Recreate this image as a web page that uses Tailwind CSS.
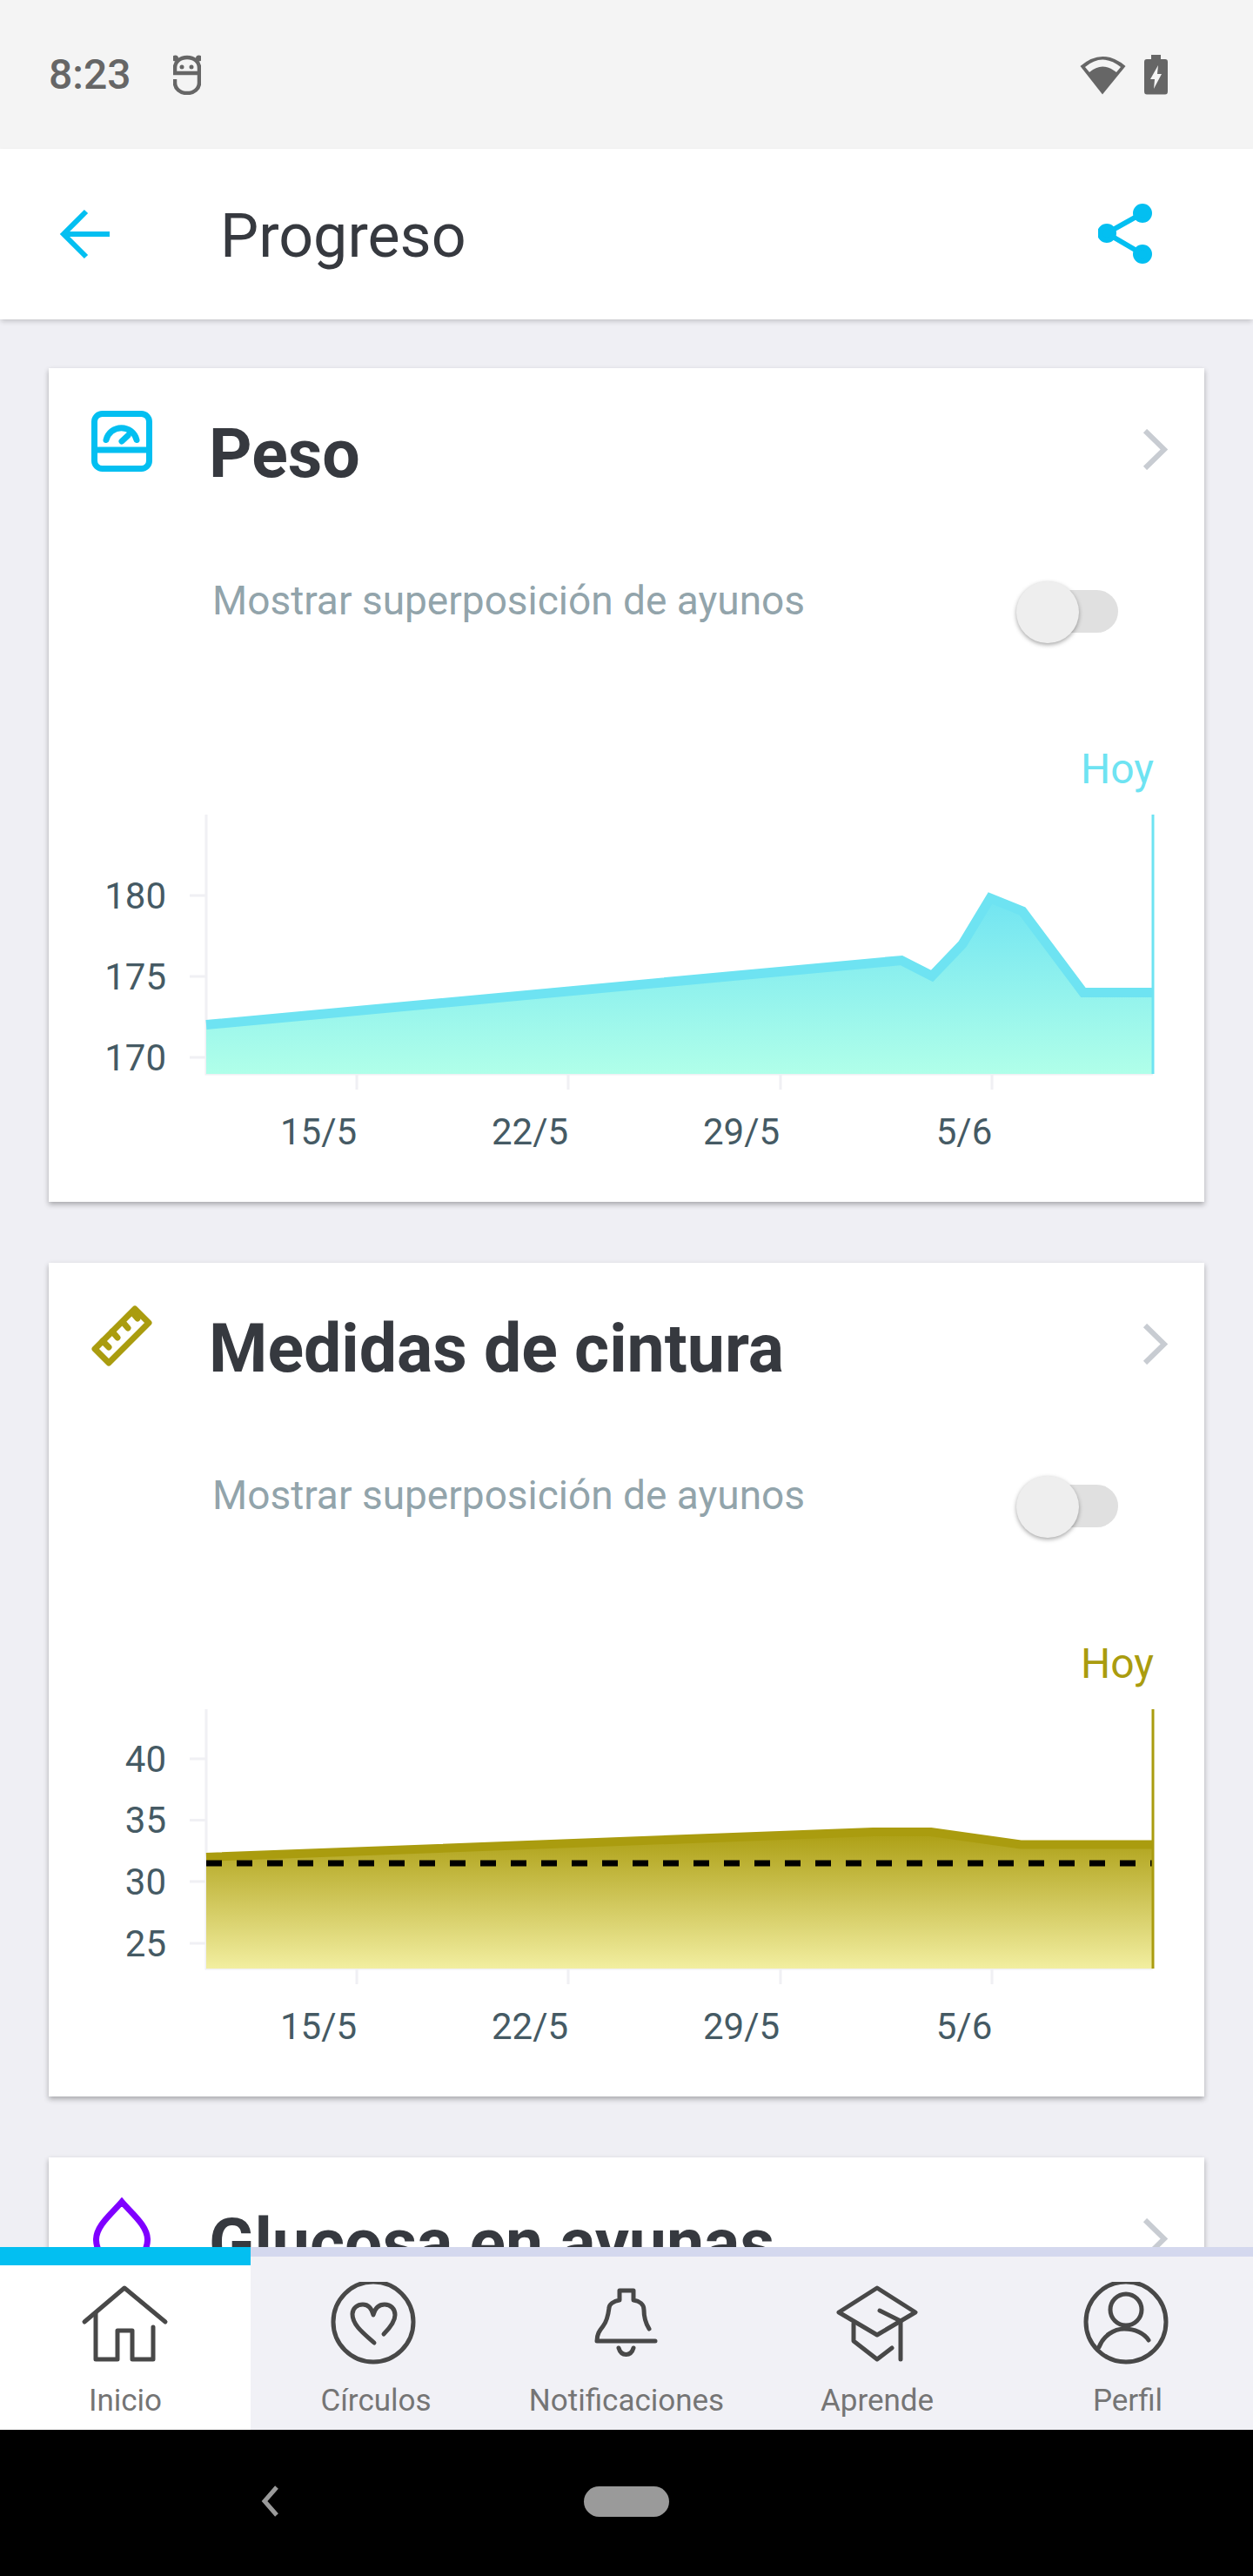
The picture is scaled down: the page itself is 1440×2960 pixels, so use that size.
<!DOCTYPE html>
<html lang="es">
<head>
<meta charset="utf-8">
<script src="https://cdn.jsdelivr.net/npm/@tailwindcss/browser@4"></script>
<title>Progreso</title>
</head>
<body class="m-0">
<div class="w-[1440px] h-[2960px] flex flex-col overflow-hidden bg-[#efeff4] font-['Roboto',sans-serif]">

  <!-- status bar -->
  <div class="h-[171px] shrink-0 bg-[#f4f4f4] flex items-center justify-between pl-[56px] pr-[98px]">
    <div class="flex items-center gap-[49px]">
      <span class="text-[48px] leading-none font-medium text-[#666666] w-[94px]">8:23</span>
      <svg width="32" height="46" viewBox="199 62 32 46" fill="none" stroke="#666666" stroke-width="4.5">
        <path d="M229 83H201V77C201 70 207 65 215 65C223 65 229 70 229 77V94C229 101 223 106 215 106C207 106 201 101 201 94V90"/>
        <circle cx="201.500" cy="66" r="3.500" fill="#666666" stroke="none"/>
        <circle cx="228.500" cy="66" r="3.500" fill="#666666" stroke="none"/>
        <circle cx="209" cy="76" r="2.500" fill="#666666" stroke="none"/>
        <circle cx="220" cy="76" r="2.500" fill="#666666" stroke="none"/>
      </svg>
    </div>
    <div class="flex items-center gap-[20px]">
      <svg width="54" height="46" viewBox="1241 62 54 46">
        <path d="M1241.500 75Q1267 53 1293.500 75L1267 107.500Z" fill="#666666"/>
        <path d="M1247 76Q1267 59 1288 76L1283 82Q1267 69 1252 82Z" fill="#f4f4f4"/>
      </svg>
      <svg width="27" height="46" viewBox="1315 62 27 46">
        <path d="M1323 62H1334V67H1339Q1342 67 1342 70V104Q1342 107.500 1339 107.500H1318Q1315 107.500 1315 104V70Q1315 67 1318 67H1323Z" fill="#666666"/>
        <path d="M1331 74L1322 90H1327L1326 101L1335 84H1330Z" fill="#f4f4f4"/>
      </svg>
    </div>
  </div>

  <!-- app bar -->
  <div class="h-[196px] shrink-0 bg-white relative z-10 flex items-center shadow-[0_3px_6px_-1px_rgba(0,0,0,0.2)]">
    <svg class="ml-[68px] shrink-0" width="62" height="62" viewBox="68 238 62 62" fill="none" stroke="#03bff1" stroke-width="6">
      <path d="M126 269H75M99 243L73 269L99 295"/>
    </svg>
    <span class="ml-[123px] mt-[3px] text-[70px] leading-none text-[#36393f]">Progreso</span>
    <svg class="ml-auto mr-[112px] shrink-0" width="66" height="70" viewBox="1262 234 66 70" fill="#03bff1" stroke="#03bff1" stroke-width="6">
      <path d="M1313 245L1272 268L1313 292" fill="none"/>
      <circle cx="1313" cy="245" r="8"/>
      <circle cx="1272" cy="268" r="8"/>
      <circle cx="1313" cy="292" r="8"/>
    </svg>
  </div>

  <!-- content -->
  <main class="flex-1 min-h-0 overflow-hidden flex flex-col gap-[70px] pt-[56px] px-[56px]">

    <!-- Peso -->
    <section class="h-[958px] shrink-0 bg-white shadow-[0_3px_6px_rgba(0,0,0,0.3)] flex flex-col">
      <div class="h-[245px] shrink-0 flex items-start pt-[49px] pl-[49px] pr-[42px]">
        <svg class="shrink-0" width="70" height="70" viewBox="105 472 70 70" fill="none" stroke="#03bff1" stroke-width="7" stroke-linecap="round">
          <rect x="108.500" y="475.500" width="63" height="63" rx="9"/>
          <path d="M108.500 517H171.500"/>
          <path d="M122 505.500A18 18 0 0 1 157 505.500"/>
          <path d="M140 507L147 500.500"/>
        </svg>
        <h2 class="ml-[65px] text-[77px] leading-[100px] font-bold text-[#36393f]">Peso</h2>
        <svg class="ml-auto mt-[21px] shrink-0" width="30" height="47" viewBox="0 0 30 47" fill="none" stroke="#c8ccd2" stroke-width="6">
          <path d="M4 2L26 23.500L4 45"/>
        </svg>
      </div>
      <div class="h-[71px] shrink-0 flex items-center pl-[188px] pr-[99px]">
        <span class="text-[46px] leading-none text-[#92a4ab] -mt-[28px]">Mostrar superposición de ayunos</span>
        <div class="ml-auto relative w-[117px] h-[71px]">
          <div class="absolute left-[12px] top-[10px] w-[105px] h-[49px] rounded-full bg-[#e0e0e0]"></div>
          <div class="absolute left-0 top-0 w-[72px] h-[71px] rounded-full bg-[#eeeeee] shadow-[0_2px_5px_rgba(0,0,0,0.35)]"></div>
        </div>
      </div>
      <div class="h-[104px] shrink-0"></div>
      <svg class="block shrink-0" width="1328" height="538" viewBox="56 843 1328 538" font-family="Roboto, sans-serif">
        <defs>
          <linearGradient id="g1" gradientUnits="userSpaceOnUse" x1="0" y1="1022" x2="0" y2="1234">
            <stop offset="0" stop-color="#6ee3f2"/>
            <stop offset="1" stop-color="#b0ffe9"/>
          </linearGradient>
        </defs>
        <text x="1326" y="900" text-anchor="end" font-size="48" fill="#6ee3f2">Hoy</text>
        <g fill="none" stroke="#f0f0f4" stroke-width="3">
          <path d="M237 936V1234H1325"/>
          <path d="M218 1029H237M218 1122H237M218 1215H237"/>
          <path d="M410 1234V1252M653 1234V1252M897 1234V1252M1140 1234V1252"/>
        </g>
        <path d="M237 1177L1036 1103L1071 1121L1106 1085L1138 1032L1175 1047L1245 1140L1325 1140V1234H237Z" fill="url(#g1)"/>
        <path d="M237 1177.500L1036 1103.500L1071 1121.500L1106 1085L1138 1032L1175 1047L1245 1140.500L1325 1140.500" fill="none" stroke="#6ee3f2" stroke-width="11"/>
        <path d="M1325 936V1234" stroke="#6ee3f2" stroke-width="3"/>
        <g font-size="42" fill="#455a64" text-anchor="end">
          <text x="191" y="1044">180</text>
          <text x="191" y="1137">175</text>
          <text x="191" y="1230">170</text>
        </g>
        <g font-size="42" fill="#455a64" text-anchor="middle">
          <text x="366" y="1315">15/5</text>
          <text x="609" y="1315">22/5</text>
          <text x="852" y="1315">29/5</text>
          <text x="1108" y="1315">5/6</text>
        </g>
      </svg>
    </section>

    <!-- Medidas de cintura -->
    <section class="h-[958px] shrink-0 bg-white shadow-[0_3px_6px_rgba(0,0,0,0.3)] flex flex-col">
      <div class="h-[245px] shrink-0 flex items-start pt-[49px] pl-[49px] pr-[42px]">
        <svg class="shrink-0" width="70" height="70" viewBox="105 1500 70 70" fill="none" stroke="#aa9c0f" stroke-width="7" stroke-linecap="round" stroke-linejoin="round">
          <path d="M155 1504L171 1520L125 1566L109 1550Z"/>
          <path d="M118 1541L125 1548M129 1530L135 1537M141 1519L147 1526M152 1508L158 1515"/>
        </svg>
        <h2 class="ml-[65px] text-[77px] leading-[100px] font-bold text-[#36393f]">Medidas de cintura</h2>
        <svg class="ml-auto mt-[21px] shrink-0" width="30" height="47" viewBox="0 0 30 47" fill="none" stroke="#c8ccd2" stroke-width="6">
          <path d="M4 2L26 23.500L4 45"/>
        </svg>
      </div>
      <div class="h-[71px] shrink-0 flex items-center pl-[188px] pr-[99px]">
        <span class="text-[46px] leading-none text-[#92a4ab] -mt-[28px]">Mostrar superposición de ayunos</span>
        <div class="ml-auto relative w-[117px] h-[71px]">
          <div class="absolute left-[12px] top-[10px] w-[105px] h-[49px] rounded-full bg-[#e0e0e0]"></div>
          <div class="absolute left-0 top-0 w-[72px] h-[71px] rounded-full bg-[#eeeeee] shadow-[0_2px_5px_rgba(0,0,0,0.35)]"></div>
        </div>
      </div>
      <div class="h-[104px] shrink-0"></div>
      <svg class="block shrink-0" width="1328" height="538" viewBox="56 1871 1328 538" font-family="Roboto, sans-serif">
        <defs>
          <linearGradient id="g2" gradientUnits="userSpaceOnUse" x1="0" y1="2100" x2="0" y2="2262">
            <stop offset="0" stop-color="#aa9c0f"/>
            <stop offset="1" stop-color="#f2eea0"/>
          </linearGradient>
        </defs>
        <text x="1326" y="1928" text-anchor="end" font-size="48" fill="#aa9c0f">Hoy</text>
        <g fill="none" stroke="#f0f0f4" stroke-width="3">
          <path d="M237 1964V2262H1325"/>
          <path d="M218 2021H237M218 2091.500H237M218 2162H237M218 2233H237"/>
          <path d="M410 2262V2280M653 2262V2280M897 2262V2280M1140 2262V2280"/>
        </g>
        <path d="M237 2134L1003 2105L1070 2105L1173 2119.500L1325 2119.500V2262H237Z" fill="url(#g2)"/>
        <path d="M237 2134L1003 2105L1070 2105L1173 2119.500L1325 2119.500" fill="none" stroke="#aa9c0f" stroke-width="10"/>
        <path d="M237 2141H1325" fill="none" stroke="#000000" stroke-width="7" stroke-dasharray="18 17"/>
        <path d="M1325 1964V2262" stroke="#aa9c0f" stroke-width="3"/>
        <g font-size="42" fill="#455a64" text-anchor="end">
          <text x="191" y="2036">40</text>
          <text x="191" y="2106">35</text>
          <text x="191" y="2177">30</text>
          <text x="191" y="2248">25</text>
        </g>
        <g font-size="42" fill="#455a64" text-anchor="middle">
          <text x="366" y="2343">15/5</text>
          <text x="609" y="2343">22/5</text>
          <text x="852" y="2343">29/5</text>
          <text x="1108" y="2343">5/6</text>
        </g>
      </svg>
    </section>

    <!-- Glucosa -->
    <section class="h-[958px] shrink-0 bg-white shadow-[0_3px_6px_rgba(0,0,0,0.3)]">
      <div class="flex items-start pt-[46px] pl-[51px] pr-[42px]">
        <svg class="shrink-0" width="66" height="80" viewBox="107 2525 66 80" fill="none" stroke="#7f00ff" stroke-width="7">
          <path d="M140 2530C128 2544 110 2558 110.500 2574C111 2590 124 2601 140 2601C156 2601 169 2590 169.500 2574C170 2558 152 2544 140 2530Z"/>
        </svg>
        <h2 class="ml-[67px] mt-[3px] text-[77px] leading-[100px] font-bold text-[#36393f]">Glucosa en ayunas</h2>
        <svg class="ml-auto mt-[24px] shrink-0" width="30" height="47" viewBox="0 0 30 47" fill="none" stroke="#c8ccd2" stroke-width="6">
          <path d="M4 2L26 23.500L4 45"/>
        </svg>
      </div>
    </section>
  </main>

  <!-- bottom nav -->
  <nav class="h-[210px] shrink-0 relative z-10 grid grid-cols-5 bg-[#f1f1f6] border-t-[11px] border-[#d4d8ee]">
    <a class="relative bg-white flex flex-col items-center">
      <div class="absolute left-0 right-0 -top-[11px] h-[21px] bg-[#03bff1]"></div>
      <svg class="mt-[29px] shrink-0" width="104" height="96" viewBox="92 2622 104 96" fill="none" stroke="#484848" stroke-width="5" stroke-linecap="round" stroke-linejoin="round">
        <path d="M97 2668L143 2629L190 2668"/>
        <path d="M110 2658V2711H135V2678H152V2711H176V2674"/>
      </svg>
      <span class="mt-[19px] text-[35px] leading-[44px] text-[#757575]">Inicio</span>
    </a>
    <a class="flex flex-col items-center">
      <svg class="mt-[29px] shrink-0" width="104" height="96" viewBox="381 2622 104 96" fill="none" stroke="#484848" stroke-width="5" stroke-linecap="round" stroke-linejoin="round">
        <circle cx="430" cy="2668" r="46"/>
        <path d="M431 2692C420 2682 406 2672 406 2659C406 2652 412 2648 418 2648C424 2648 428 2652 430 2660C432 2652 437 2648 443 2648C450 2648 455 2653 455 2660C455 2668 449 2675 442 2682"/>
      </svg>
      <span class="mt-[19px] text-[35px] leading-[44px] text-[#757575]">Círculos</span>
    </a>
    <a class="flex flex-col items-center">
      <svg class="mt-[29px] shrink-0" width="104" height="96" viewBox="668 2622 104 96" fill="none" stroke="#484848" stroke-width="5" stroke-linecap="round" stroke-linejoin="round">
        <path d="M746 2676C741 2668 740 2660 740 2654C740 2648 735 2644 728 2643V2632H712V2643C705 2644 700 2648 700 2652C699 2660 697 2668 693 2673C689 2678 686 2682 686 2690H753"/>
        <path d="M711 2698C714 2708 725 2708 728 2698"/>
      </svg>
      <span class="mt-[19px] text-[35px] leading-[44px] text-[#757575]">Notificaciones</span>
    </a>
    <a class="flex flex-col items-center">
      <svg class="mt-[29px] shrink-0" width="104" height="96" viewBox="955 2622 104 96" fill="none" stroke="#484848" stroke-width="5" stroke-linecap="round" stroke-linejoin="round">
        <path d="M1007 2629L1051 2657L1007 2683L963 2657Z"/>
        <path d="M980 2670V2690L1007 2711L1024 2698"/>
        <path d="M1010 2655L1034 2667V2711"/>
      </svg>
      <span class="mt-[19px] text-[35px] leading-[44px] text-[#757575]">Aprende</span>
    </a>
    <a class="flex flex-col items-center">
      <svg class="mt-[29px] shrink-0" width="104" height="96" viewBox="1244 2622 104 96" fill="none" stroke="#484848" stroke-width="5" stroke-linecap="round" stroke-linejoin="round">
        <circle cx="1294" cy="2668" r="46"/>
        <circle cx="1294" cy="2654" r="18"/>
        <path d="M1263 2697C1268 2684 1280 2676 1292 2676C1304 2676 1315 2681 1320 2689"/>
      </svg>
      <span class="mt-[19px] text-[35px] leading-[44px] text-[#757575]">Perfil</span>
    </a>
  </nav>

  <!-- android nav -->
  <div class="h-[168px] shrink-0 bg-black flex items-center">
    <svg class="ml-[298px] -mt-[4px] shrink-0" width="26" height="38" viewBox="0 0 26 38" fill="none" stroke="#9a9a9a" stroke-width="5">
      <path d="M20 3L6 19L20 35"/>
    </svg>
    <div class="ml-[347px] -mt-[4px] w-[98px] h-[35px] rounded-full bg-[#9a9a9a]"></div>
  </div>
</div>
</body>
</html>
